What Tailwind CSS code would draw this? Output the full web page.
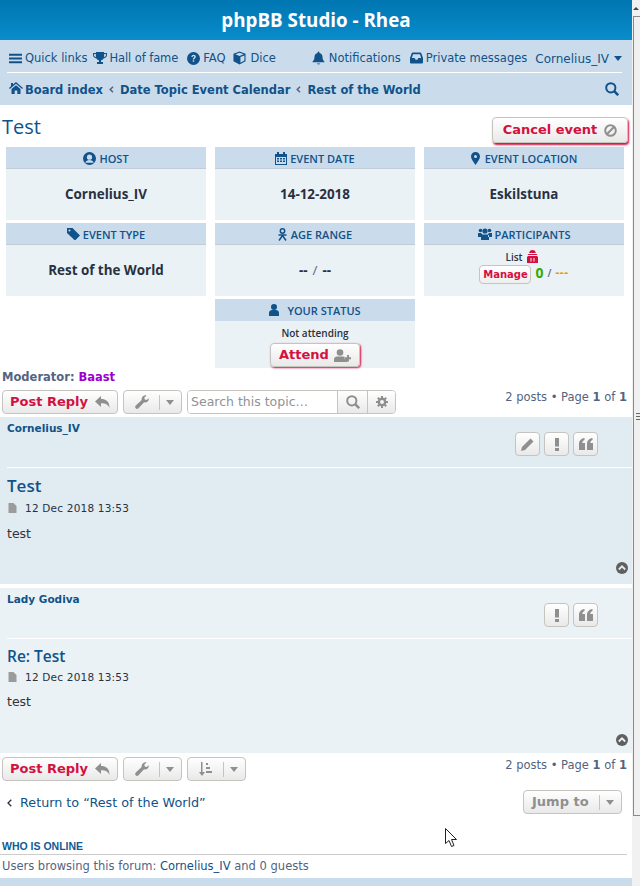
<!DOCTYPE html>
<html lang="en">
<head>
  <meta charset="UTF-8" />
  <meta name="viewport" content="width=device-width, initial-scale=1.0" />
  <title>phpBB Studio - Rhea</title>
  <script src="https://cdn.jsdelivr.net/npm/@tailwindcss/browser@4"></script>
</head>
<body class="bg-white overflow-hidden font-['DejaVu_Sans',sans-serif] text-[11.5px] text-[#536482]">
  <div class="relative h-[886px] w-[640px] overflow-hidden flex">
    <div class="w-[632px] shrink-0">

      <!-- header -->
      <div class="h-10 bg-gradient-to-b from-[#0076b1] to-[#0a8ccc] flex items-center justify-center text-white text-[18.8px] font-bold font-['Open_Sans',sans-serif]">phpBB Studio - Rhea</div>

      <!-- nav -->
      <div class="h-[65px] bg-[#cadceb] pl-[7px] pr-[10px] text-[#105289]">
        <div class="h-[33px] flex items-center border-b border-white pt-[6px]">
          <svg class="w-[13px] h-[13px] mr-[3px] ml-[2px] mb-[2px]" viewBox="0 0 14 14" fill="#105289"><path d="M0 2h14v2H0zM0 6h14v2H0zM0 10h14v2H0z"/></svg>
          <span>Quick links</span>
          <svg class="w-[14px] h-[14px] ml-[5px] mr-[3px] mb-[2px]" viewBox="0 0 14 14" fill="#105289"><path d="M3 1h8v1h3v2c0 2-1.500 3-3.500 3.500C10 8.500 9 9 8 9.500V11h2v2H4v-2h2V9.500C5 9 4 8.500 3.500 7.500 1.500 7 0 6 0 4V2h3zM1 3v1c0 1 .7 1.800 2 2.300L2.800 3zM13 3h-1.800L11 6.300c1.300-.5 2-1.300 2-2.300z"/></svg>
          <span class="tracking-[-.1px]">Hall of fame</span>
          <svg class="w-[13px] h-[13px] ml-[9px] mr-[3px] mb-[2px]" viewBox="0 0 14 14"><circle cx="7" cy="7" r="7" fill="#105289"/><path d="M4.700 5.300C4.800 3.800 5.800 3 7.100 3c1.400 0 2.400.9 2.400 2 0 1.800-1.800 1.700-1.800 3.200H6.200C6.200 6 7.900 6 7.900 5.100c0-.4-.3-.7-.8-.7-.6 0-.9.400-1 1zM6.200 9h1.500v1.600H6.200z" fill="#cadceb"/></svg>
          <span>FAQ</span>
          <svg class="w-[13px] h-[14px] ml-[8px] mr-[4px] mb-[2px]" viewBox="0 0 14 14" fill="#105289"><path d="M7 0l6.500 2.500v8L7 14 .5 10.500v-8zM7 1.300L2.500 3 7 4.800 11.500 3zM8 6v6l4.300-2.300V4.300z"/></svg>
          <span>Dice</span>
          <div class="ml-auto flex items-center">
            <svg class="w-[13px] h-[14px] mr-[4px] mb-[2px]" viewBox="0 0 14 14" fill="#105289"><path d="M7 0c.6 0 1 .4 1 1v.6c2 .4 3.300 2 3.300 4 0 3 1 4 2 5v1H.7v-1c1-1 2-2 2-5 0-2 1.300-3.600 3.300-4V1c0-.6.4-1 1-1zM5.300 13h3.400c0 .6-.8 1-1.700 1s-1.700-.4-1.700-1z"/></svg>
            <span>Notifications</span>
            <svg class="w-[13px] h-[12px] ml-[9px] mr-[3px] mb-[2px]" viewBox="0 0 14 12" fill="#105289"><path d="M3 0h8c.6 0 1 .3 1.200.8L14 6v4.500c0 .8-.7 1.500-1.500 1.500h-11C.7 12 0 11.300 0 10.500V6L1.800.8C2 .3 2.400 0 3 0zm.3 2L2 6h3l1 2h2l1-2h3l-1.300-4z"/></svg>
            <span>Private messages</span>
            <span class="ml-[8px] text-[12px]">Cornelius_IV</span>
            <span class="ml-[5px] mb-[2px] w-0 h-0 border-x-[4px] border-x-transparent border-t-[5px] border-t-[#105289]"></span>
          </div>
        </div>
        <div class="h-[31px] flex items-center font-bold pt-[4px]">
          <svg class="w-[14px] h-[12px] ml-[2px] mr-[2px] mb-[6px]" viewBox="0 0 14 12" fill="#105289"><path d="M7 0l7 6-.8 1L7 1.800.8 7 0 6l2-1.700V1h2v1.600zM2.500 7L7 3.300 11.500 7v5H8.300V8.500H5.700V12H2.500z"/></svg>
          <span>Board index</span>
          <svg class="w-[5px] h-[7px] mx-[6px] mb-[2px]" viewBox="0 0 5 7" fill="none" stroke="#536482" stroke-width="1.500"><path d="M4 .8L1.200 3.500 4 6.200"/></svg>
          <span>Date Topic Event Calendar</span>
          <svg class="w-[5px] h-[7px] mx-[6px] mb-[2px]" viewBox="0 0 5 7" fill="none" stroke="#536482" stroke-width="1.500"><path d="M4 .8L1.200 3.500 4 6.200"/></svg>
          <span>Rest of the World</span>
          <svg class="ml-auto mr-[3px] mb-[4px] w-[14px] h-[14px]" viewBox="0 0 14 14" fill="none" stroke="#105289" stroke-width="2"><circle cx="5.800" cy="5.800" r="4.600"/><path d="M9.200 9.200L13.200 13.200" stroke-width="2.500"/></svg>
        </div>
      </div>

      <!-- title -->
      <div class="h-[42px] flex items-start justify-between pl-[2px] pr-[4px]">
        <h2 class="text-[20px] leading-[26px] mt-[9px] text-[#105289] font-['Open_Sans',sans-serif]">Test</h2>
        <button class="mt-[12px] h-[26px] w-[136px] flex items-center justify-center gap-[7px] rounded-[4px] border border-[#c7c3bf] bg-gradient-to-b from-white to-[#e9e9e9] shadow-[1px_2px_2px_#d31141] text-[13px] font-bold text-[#d31141]">
          Cancel event
          <svg class="w-[13px] h-[13px]" viewBox="0 0 13 13" fill="none" stroke="#8f8f8f" stroke-width="2"><circle cx="6.500" cy="6.500" r="5.300"/><path d="M2.800 10.200L10.200 2.800"/></svg>
        </button>
      </div>

      <!-- event info -->
      <div class="grid grid-cols-[200px_200px_200px] gap-x-[9px] gap-y-[3px] pl-[6px] font-['Open_Sans',sans-serif]">
        <div class="h-[73px] bg-[#ebf2f6] flex flex-col">
          <div class="h-[22px] pt-[3px] bg-[#cadceb] border-b border-[#c3cbd7] flex items-center justify-center gap-[3px] text-[#105289] text-[11px] font-semibold">
            <svg class="w-[13px] h-[13px] mb-[2px]" viewBox="0 0 13 13"><circle cx="6.500" cy="6.500" r="6.500" fill="#105289"/><circle cx="6.500" cy="5.200" r="2.600" fill="#cadceb"/><path d="M2.300 10.800c.6-2 2.300-2.800 4.200-2.800s3.600.8 4.200 2.800" fill="#cadceb"/></svg>
            HOST
          </div>
          <div class="flex-1 flex items-center justify-center text-[13.4px] font-bold text-[#28313f]">Cornelius_IV</div>
        </div>
        <div class="h-[73px] bg-[#ebf2f6] flex flex-col">
          <div class="h-[22px] pt-[3px] bg-[#cadceb] border-b border-[#c3cbd7] flex items-center justify-center gap-[3px] text-[#105289] text-[11px] font-semibold">
            <svg class="w-[12px] h-[13px] mb-[2px]" viewBox="0 0 12 13" fill="#105289"><path d="M2 0h2v2h4V0h2v2h2v11H0V2h2zM1 5v7h10V5z"/><path d="M2 6h2v1.500H2zM5 6h2v1.500H5zM8 6h2v1.500H8zM2 8.500h2V10H2zM5 8.500h2V10H5zM8 8.500h2V10H8z"/></svg>
            EVENT DATE
          </div>
          <div class="flex-1 flex items-center justify-center text-[13.4px] font-bold text-[#28313f]">14-12-2018</div>
        </div>
        <div class="h-[73px] bg-[#ebf2f6] flex flex-col">
          <div class="h-[22px] pt-[3px] bg-[#cadceb] border-b border-[#c3cbd7] flex items-center justify-center gap-[5px] text-[#105289] text-[11px] font-semibold">
            <svg class="w-[9px] h-[13px] mb-[2px]" viewBox="0 0 9 13" fill="#105289"><path fill-rule="evenodd" d="M4.500 0C7 0 9 2 9 4.500c0 2.500-2.500 5.500-4.500 8.500C2.500 10 0 7 0 4.500 0 2 2 0 4.500 0zm0 3a1.500 1.500 0 100 3 1.500 1.500 0 000-3z"/></svg>
            EVENT LOCATION
          </div>
          <div class="flex-1 flex items-center justify-center text-[13.4px] font-bold text-[#28313f]">Eskilstuna</div>
        </div>

        <div class="h-[73px] bg-[#ebf2f6] flex flex-col">
          <div class="h-[22px] pt-[3px] bg-[#cadceb] border-b border-[#c3cbd7] flex items-center justify-center gap-[3px] text-[#105289] text-[11px] font-semibold">
            <svg class="w-[13px] h-[12px] mb-[2px]" viewBox="0 0 13 12" fill="#105289"><path fill-rule="evenodd" d="M0 0h5.500L13 7.500 8 12.500 0 5zM2.500 1.500a1 1 0 100 2 1 1 0 000-2z"/></svg>
            EVENT TYPE
          </div>
          <div class="flex-1 flex items-center justify-center text-[13.4px] font-bold text-[#28313f]">Rest of the World</div>
        </div>
        <div class="h-[73px] bg-[#ebf2f6] flex flex-col">
          <div class="h-[22px] pt-[3px] bg-[#cadceb] border-b border-[#c3cbd7] flex items-center justify-center gap-[4px] text-[#105289] text-[11px] font-semibold">
            <svg class="w-[9px] h-[13px] mb-[2px]" viewBox="0 0 9 13" fill="none" stroke="#105289" stroke-width="1.500"><circle cx="4.500" cy="3" r="2.200"/><path d="M.5 7h8M1 12.500l3.500-5 3.500 5"/></svg>
            AGE RANGE
          </div>
          <div class="flex-1 flex items-center justify-center gap-[5px] text-[13.4px] font-bold text-[#28313f]">-- <span class="font-normal text-[#536482]">/</span> --</div>
        </div>
        <div class="h-[73px] bg-[#ebf2f6] flex flex-col">
          <div class="h-[22px] pt-[3px] bg-[#cadceb] border-b border-[#c3cbd7] flex items-center justify-center gap-[3px] text-[#105289] text-[11px] font-semibold">
            <svg class="w-[14px] h-[12px] mb-[2px]" viewBox="0 0 14 12" fill="#105289"><circle cx="2.500" cy="2.500" r="1.800"/><circle cx="11.500" cy="2.500" r="1.800"/><circle cx="7" cy="3" r="2.600"/><path d="M0 5h3l1 1v3H0zM14 5h-3l-1 1v3h4zM4 6.500h6l1 1V12H3V7.500z"/></svg>
            PARTICIPANTS
          </div>
          <div class="flex-1 flex flex-col items-center pt-[6px] text-[10px] font-semibold text-[#28313f]">
            <div class="h-[12px] flex items-center gap-[4px] pr-[5px]">
              List
              <svg class="w-[11px] h-[13px] -mt-[2px]" viewBox="0 0 11 13" fill="#d31141"><path d="M5.500 0C7.500 0 8.500 1 8.800 3H2.200C2.500 1 3.500 0 5.500 0zM1.500 4h8l1 1H.5zM1 6h9l1 1v6H0V7zm2.500 2v3.500h1V8zm3 0v3.500h1V8z"/></svg>
            </div>
            <div class="flex items-center gap-[4px] mt-[2px]">
              <span class="h-[19px] w-[52px] flex items-center justify-center rounded-[4px] border border-[#c7c3bf] bg-gradient-to-b from-white to-[#eeeeee] font-['DejaVu_Sans',sans-serif] text-[10px] font-bold text-[#d31141]">Manage</span>
              <span class="text-[14px] font-bold leading-[14px] text-[#33aa00] -mt-[4px]">0</span>
              <span class="text-[#536482] -mt-[2px]">/</span>
              <span class="text-[12px] font-bold tracking-[.5px] text-[#e69a00] -mt-[3px]">---</span>
            </div>
          </div>
        </div>

        <div class="col-start-2 h-[69px] bg-[#ebf2f6] flex flex-col">
          <div class="h-[22px] pt-[2px] bg-[#cadceb] flex items-center justify-center gap-[8px] text-[#105289] text-[11px] font-semibold">
            <svg class="w-[10px] h-[12px] mb-[2px]" viewBox="0 0 10 12" fill="#105289"><circle cx="5" cy="3" r="3"/><path d="M0 12V9c0-2 1.500-3 3-3h4c1.500 0 3 1 3 3v3z"/></svg>
            YOUR STATUS
          </div>
          <div class="flex flex-col items-center pt-[6px]">
            <div class="h-[12px] leading-[12px] text-[10px] font-semibold text-[#28313f]">Not attending</div>
            <button class="mt-[4px] h-[24px] w-[90px] flex items-center justify-center gap-[5px] rounded-[4px] border border-[#c7c3bf] bg-gradient-to-b from-white to-[#e9e9e9] shadow-[1px_1px_2px_#d31141] font-['DejaVu_Sans',sans-serif] text-[13px] font-bold text-[#d31141]">
              Attend
              <svg class="w-[17px] h-[13px]" viewBox="0 0 17 13" fill="#8f8f8f"><circle cx="6" cy="3.500" r="3.300"/><path d="M0 13v-2.500C0 8.500 1.500 7.500 3 7.500h6c.5 0 1 .1 1.400.3v2.400h3V13zM13 6h2v2.200h2v2h-2v2.300h-2v-2.300h-2.300v-2H13z"/></svg>
            </button>
          </div>
        </div>
      </div>

      <div class="h-[22px] pl-[2px] pt-[3px] leading-[13px] font-bold">Moderator: <span class="text-[#9900cc]">Baast</span></div>

      <!-- top action bar -->
      <div class="h-[27px] pl-[2px] pr-[5px] flex items-start">
        <button class="h-[24px] w-[116px] flex items-center justify-center gap-[7px] rounded-[4px] border border-[#c7c3bf] bg-gradient-to-b from-white to-[#e9e9e9] text-[13px] font-bold text-[#d31141]">
          Post Reply
          <svg class="w-[15px] h-[12px]" viewBox="0 0 15 12" fill="#8f8f8f"><path d="M6 0v3c5 0 8.500 2.500 8.500 9-1.500-3.500-4-4.800-8.500-4.800V11L0 5.500z"/></svg>
        </button>
        <div class="ml-[5px] h-[24px] w-[59px] flex items-center rounded-[4px] border border-[#c7c3bf] bg-gradient-to-b from-white to-[#e9e9e9]">
          <svg class="w-[14px] h-[14px] ml-[11px]" viewBox="0 0 14 14" fill="#8f8f8f"><path d="M13.800 3.300c.3 2-1 4-3.200 4.200-.6 0-1.100 0-1.500-.2L3.500 13.200c-.9.900-2 .9-2.800.1-.7-.8-.7-1.900.1-2.700L6.700 5C6.300 3 7.300 1 9.500.4 10.300.1 11 .1 11.700.3L9.300 2.700l.5 1.800 1.800.5z"/></svg>
          <span class="ml-[10px] h-[15px] w-px bg-[#c7c3bf]"></span>
          <span class="ml-[6px] w-0 h-0 border-x-[4px] border-x-transparent border-t-[5px] border-t-[#8f8f8f]"></span>
        </div>
        <div class="ml-[5px] h-[24px] w-[209px] flex rounded-[4px] border border-[#c7c3bf] overflow-hidden">
          <span class="w-[149px] flex items-center pl-[3px] text-[12.5px] text-[#8f9296] bg-white">Search this topic…</span>
          <span class="w-[30px] flex items-center justify-center border-l border-[#c7c3bf] bg-gradient-to-b from-white to-[#e9e9e9]">
            <svg class="w-[14px] h-[14px]" viewBox="0 0 14 14" fill="none" stroke="#8f8f8f" stroke-width="2"><circle cx="5.800" cy="5.800" r="4.600"/><path d="M9.200 9.200L13.200 13.200" stroke-width="2.500"/></svg>
          </span>
          <span class="flex-1 flex items-center justify-center border-l border-[#c7c3bf] bg-gradient-to-b from-white to-[#e9e9e9]">
            <svg class="w-[12px] h-[12px]" viewBox="0 0 12 12"><circle cx="6" cy="6" r="3.200" fill="none" stroke="#8f8f8f" stroke-width="2.400"/><path d="M6 0v2.500M6 9.500V12M0 6h2.500M9.500 6H12M1.800 1.800l1.800 1.800M8.400 8.400l1.800 1.800M10.200 1.800L8.400 3.600M3.600 8.400l-1.800 1.800" stroke="#8f8f8f" stroke-width="2"/></svg>
          </span>
        </div>
        <div class="ml-auto -mt-[1px]">2 posts • Page <b>1</b> of <b>1</b></div>
      </div>

      <!-- post 1 -->
      <div class="h-[167px] bg-[#e1ebf2] px-[7px] pt-[5px]">
        <div class="h-[46px] border-b border-white flex justify-between items-start -mr-[7px]">
          <span class="leading-[13px] text-[10.5px] font-bold text-[#105289]">Cornelius_IV</span>
          <div class="flex gap-[4px] mr-[34px] mt-[10px]">
            <span class="w-[25px] h-[24px] flex items-center justify-center rounded-[4px] border border-[#c7c3bf] bg-gradient-to-b from-white to-[#e9e9e9]">
              <svg class="w-[13px] h-[13px]" viewBox="0 0 13 13" fill="#8f8f8f"><path d="M9.500.5l3 3-8.500 8.500L0 13l1-4z"/></svg>
            </span>
            <span class="w-[25px] h-[24px] flex items-center justify-center rounded-[4px] border border-[#c7c3bf] bg-gradient-to-b from-white to-[#e9e9e9]">
              <svg class="w-[4px] h-[13px]" viewBox="0 0 4 13" fill="#8f8f8f"><path d="M0 0h4v8.500H0zM0 10h4v3H0z"/></svg>
            </span>
            <span class="w-[25px] h-[24px] flex items-center justify-center rounded-[4px] border border-[#c7c3bf] bg-gradient-to-b from-white to-[#e9e9e9]">
              <svg class="w-[14px] h-[12px]" viewBox="0 0 14 12" fill="#8f8f8f"><path d="M0 12V6C0 3 1.500.8 5.500 0v2C4 2.500 3.300 3.500 3.300 5H6v7zM8 12V6c0-3 1.500-5.200 5.500-6v2C12 2.500 11.300 3.500 11.300 5H14v7z"/></svg>
            </span>
          </div>
        </div>
        <h3 class="mt-[7px] h-[22px] leading-[22px] text-[17px] font-semibold text-[#105289] font-['Open_Sans',sans-serif]">Test</h3>
        <div class="mt-[5px] flex items-center gap-[8px] text-[10.5px] text-[#28313f] leading-[12px] tracking-[.2px]">
          <svg class="w-[9px] h-[10px] ml-[1px]" viewBox="0 0 8 10" fill="#9b9b9b"><path d="M0 0h5l3 3v7H0z"/></svg>
          12 Dec 2018 13:53
        </div>
        <p class="mt-[13px] text-[12.5px] leading-[14px] text-[#333333]">test</p>
        <div class="flex justify-end -mr-[3px] mt-[21px]">
          <svg class="w-[12px] h-[12px]" viewBox="0 0 12 12"><circle cx="6" cy="6" r="6" fill="#5f5f5f"/><path d="M2.800 7.500L6 4.300l3.200 3.200" fill="none" stroke="#e1ebf2" stroke-width="1.800"/></svg>
        </div>
      </div>

      <div class="h-[4px]"></div>

      <!-- post 2 -->
      <div class="h-[165px] bg-[#ebf2f6] px-[7px] pt-[5px]">
        <div class="h-[46px] border-b border-white flex justify-between items-start -mr-[7px]">
          <span class="leading-[13px] text-[10.5px] font-bold text-[#105289]">Lady Godiva</span>
          <div class="flex gap-[4px] mr-[34px] mt-[10px]">
            <span class="w-[25px] h-[24px] flex items-center justify-center rounded-[4px] border border-[#c7c3bf] bg-gradient-to-b from-white to-[#e9e9e9]">
              <svg class="w-[4px] h-[13px]" viewBox="0 0 4 13" fill="#8f8f8f"><path d="M0 0h4v8.500H0zM0 10h4v3H0z"/></svg>
            </span>
            <span class="w-[25px] h-[24px] flex items-center justify-center rounded-[4px] border border-[#c7c3bf] bg-gradient-to-b from-white to-[#e9e9e9]">
              <svg class="w-[14px] h-[12px]" viewBox="0 0 14 12" fill="#8f8f8f"><path d="M0 12V6C0 3 1.500.8 5.500 0v2C4 2.500 3.300 3.500 3.300 5H6v7zM8 12V6c0-3 1.500-5.200 5.500-6v2C12 2.500 11.300 3.500 11.300 5H14v7z"/></svg>
            </span>
          </div>
        </div>
        <h3 class="mt-[6px] h-[22px] leading-[22px] text-[15.5px] font-semibold text-[#105289] font-['Open_Sans',sans-serif]">Re: Test</h3>
        <div class="mt-[4px] flex items-center gap-[8px] text-[10.5px] text-[#28313f] leading-[12px] tracking-[.2px]">
          <svg class="w-[9px] h-[10px] ml-[1px]" viewBox="0 0 8 10" fill="#9b9b9b"><path d="M0 0h5l3 3v7H0z"/></svg>
          12 Dec 2018 13:53
        </div>
        <p class="mt-[12px] text-[12.5px] leading-[14px] text-[#333333]">test</p>
        <div class="flex justify-end -mr-[3px] mt-[25px]">
          <svg class="w-[12px] h-[12px]" viewBox="0 0 12 12"><circle cx="6" cy="6" r="6" fill="#5f5f5f"/><path d="M2.800 7.500L6 4.300l3.200 3.200" fill="none" stroke="#ebf2f6" stroke-width="1.800"/></svg>
        </div>
      </div>

      <!-- bottom action bar -->
      <div class="h-[37px] pl-[2px] pr-[5px] pt-[4px] flex items-start">
        <button class="h-[24px] w-[116px] flex items-center justify-center gap-[7px] rounded-[4px] border border-[#c7c3bf] bg-gradient-to-b from-white to-[#e9e9e9] text-[13px] font-bold text-[#d31141]">
          Post Reply
          <svg class="w-[15px] h-[12px]" viewBox="0 0 15 12" fill="#8f8f8f"><path d="M6 0v3c5 0 8.500 2.500 8.500 9-1.500-3.500-4-4.800-8.500-4.800V11L0 5.500z"/></svg>
        </button>
        <div class="ml-[5px] h-[24px] w-[59px] flex items-center rounded-[4px] border border-[#c7c3bf] bg-gradient-to-b from-white to-[#e9e9e9]">
          <svg class="w-[14px] h-[14px] ml-[11px]" viewBox="0 0 14 14" fill="#8f8f8f"><path d="M13.800 3.300c.3 2-1 4-3.200 4.200-.6 0-1.100 0-1.500-.2L3.500 13.200c-.9.900-2 .9-2.800.1-.7-.8-.7-1.900.1-2.700L6.700 5C6.300 3 7.300 1 9.500.4 10.300.1 11 .1 11.700.3L9.300 2.700l.5 1.800 1.800.5z"/></svg>
          <span class="ml-[10px] h-[15px] w-px bg-[#c7c3bf]"></span>
          <span class="ml-[6px] w-0 h-0 border-x-[4px] border-x-transparent border-t-[5px] border-t-[#8f8f8f]"></span>
        </div>
        <div class="ml-[5px] h-[24px] w-[59px] flex items-center rounded-[4px] border border-[#c7c3bf] bg-gradient-to-b from-white to-[#e9e9e9]">
          <svg class="w-[15px] h-[14px] ml-[10px]" viewBox="0 0 15 14" fill="#8f8f8f"><path d="M3 0h1.500v10H7l-3 4-3-4h2zM8 1h2v2H8zM8 5h4v2H8zM8 9h6v2H8z"/></svg>
          <span class="ml-[10px] h-[15px] w-px bg-[#c7c3bf]"></span>
          <span class="ml-[6px] w-0 h-0 border-x-[4px] border-x-transparent border-t-[5px] border-t-[#8f8f8f]"></span>
        </div>
        <div class="ml-auto">2 posts • Page <b>1</b> of <b>1</b></div>
      </div>

      <!-- return / jump -->
      <div class="h-[47px] pl-[7px] pr-[10px] flex items-start justify-between">
        <div class="flex items-center gap-[8px] text-[12.75px] leading-[14px] text-[#105289] mt-[6px]">
          <svg class="w-[5px] h-[8px]" viewBox="0 0 5 8" fill="none" stroke="#28313f" stroke-width="1.300"><path d="M4.300 .7L1 4l3.300 3.300"/></svg>
          <span>Return to “Rest of the World”</span>
        </div>
        <div class="h-[24px] w-[99px] flex items-center rounded-[4px] border border-[#c7c3bf] bg-gradient-to-b from-white to-[#e9e9e9] text-[13px] font-bold text-[#8f8f8f]">
          <span class="ml-[8px]">Jump to</span>
          <span class="ml-[10px] h-[15px] w-px bg-[#c7c3bf]"></span>
          <span class="ml-[6px] w-0 h-0 border-x-[4px] border-x-transparent border-t-[5px] border-t-[#8f8f8f]"></span>
        </div>
      </div>

      <!-- who is online -->
      <div class="pl-[2px]">
        <h3 class="h-[14px] leading-[14px] text-[10.5px] font-bold text-[#115a96] font-['Liberation_Sans',sans-serif] mt-[2px]">WHO IS ONLINE</h3>
        <div class="h-[24px] mt-[1px] border-t border-[#cccccc] mr-[5px] -ml-[2px] pl-[2px] pt-[5px] leading-[13px]">Users browsing this forum: <span class="text-[#105289]">Cornelius_IV</span> and 0 guests</div>
      </div>
      <div class="h-[10px] bg-[#cadceb]"></div>
    </div>

    <!-- scrollbar -->
    <div class="w-[8px] shrink-0 flex flex-col bg-[#f1f1f1]">
      <div class="h-[16px] flex items-center justify-end pr-[1px]">
        <span class="w-0 h-0 border-x-[3px] border-x-transparent border-b-[3px] border-b-[#444444]"></span>
      </div>
      <div class="h-[800px] ml-[1px] border-l border-t border-b border-[#8a8a8a] bg-[#f0f0f0] flex items-center justify-end">
        <div class="w-[4px] h-[7px] border-y border-[#666666] flex items-center"><span class="w-full h-px bg-[#666666]"></span></div>
      </div>
    </div>

    <!-- mouse pointer -->
    <svg class="absolute left-[445px] top-[828px] w-[13px] h-[20px]" viewBox="0 0 13 20"><path d="M.5.500v15l3.500-3 2.500 6 2.500-1-2.500-6h5z" fill="#fff" stroke="#222" stroke-width="1"/></svg>
  </div>
</body>
</html>
